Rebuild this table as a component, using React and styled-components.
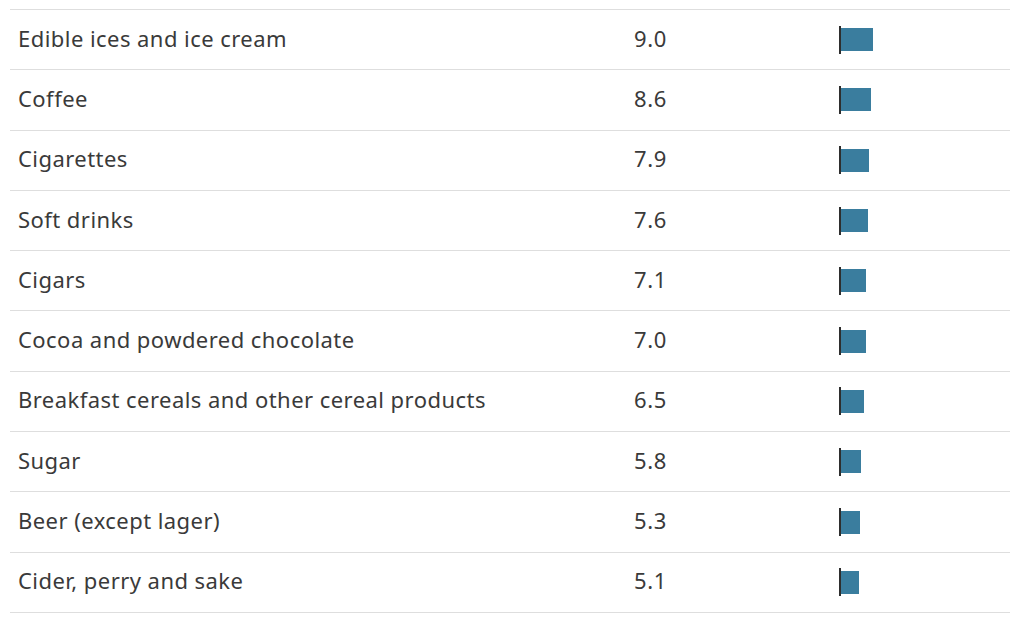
import React from "react";
import styled, { createGlobalStyle } from "styled-components";

const Global = createGlobalStyle`
  html, body { margin: 0; padding: 0; background: #fff; }
  body { font-family: "Noto Sans", "Open Sans", sans-serif; color: #3a3a3a; }
`;

const rows = [
  ["Edible ices and ice cream", 9.0],
  ["Coffee", 8.6],
  ["Cigarettes", 7.9],
  ["Soft drinks", 7.6],
  ["Cigars", 7.1],
  ["Cocoa and powdered chocolate", 7.0],
  ["Breakfast cereals and other cereal products", 6.5],
  ["Sugar", 5.8],
  ["Beer (except lager)", 5.3],
  ["Cider, perry and sake", 5.1],
];

const Table = styled.div`
  margin: 9px 0 0 10px;
  width: 1000px;
  border-top: 1px solid #dedede;
`;

const Row = styled.div`
  display: grid;
  grid-template-columns: 616px 205px 1fr;
  align-items: center;
  box-sizing: border-box;
  height: 60.3px;
  padding-left: 8px;
  border-bottom: 1px solid #dedede;
`;

const Label = styled.div`
  font-size: 22px;
  letter-spacing: 0.45px;
  line-height: 1;
  margin-bottom: 4px;
`;

const Value = styled.div`
  font-size: 22px;
  letter-spacing: 0.6px;
  line-height: 1;
  margin-bottom: 4px;
`;

const BarCell = styled.div`
  display: flex;
  align-items: center;
`;

const Axis = styled.div`
  width: 2px;
  height: 28px;
  background: #2e2e2e;
`;

const Bar = styled.div`
  height: 23px;
  background: #3a7d9e;
`;

export default function App() {
  return (
    <>
      <Global />
      <Table>
        {rows.map(([label, v]) => (
          <Row key={label}>
            <Label>{label}</Label>
            <Value>{v.toFixed(1)}</Value>
            <BarCell>
              <Axis />
              <Bar style={{ width: `${v * 3.5}px` }} />
            </BarCell>
          </Row>
        ))}
      </Table>
    </>
  );
}
